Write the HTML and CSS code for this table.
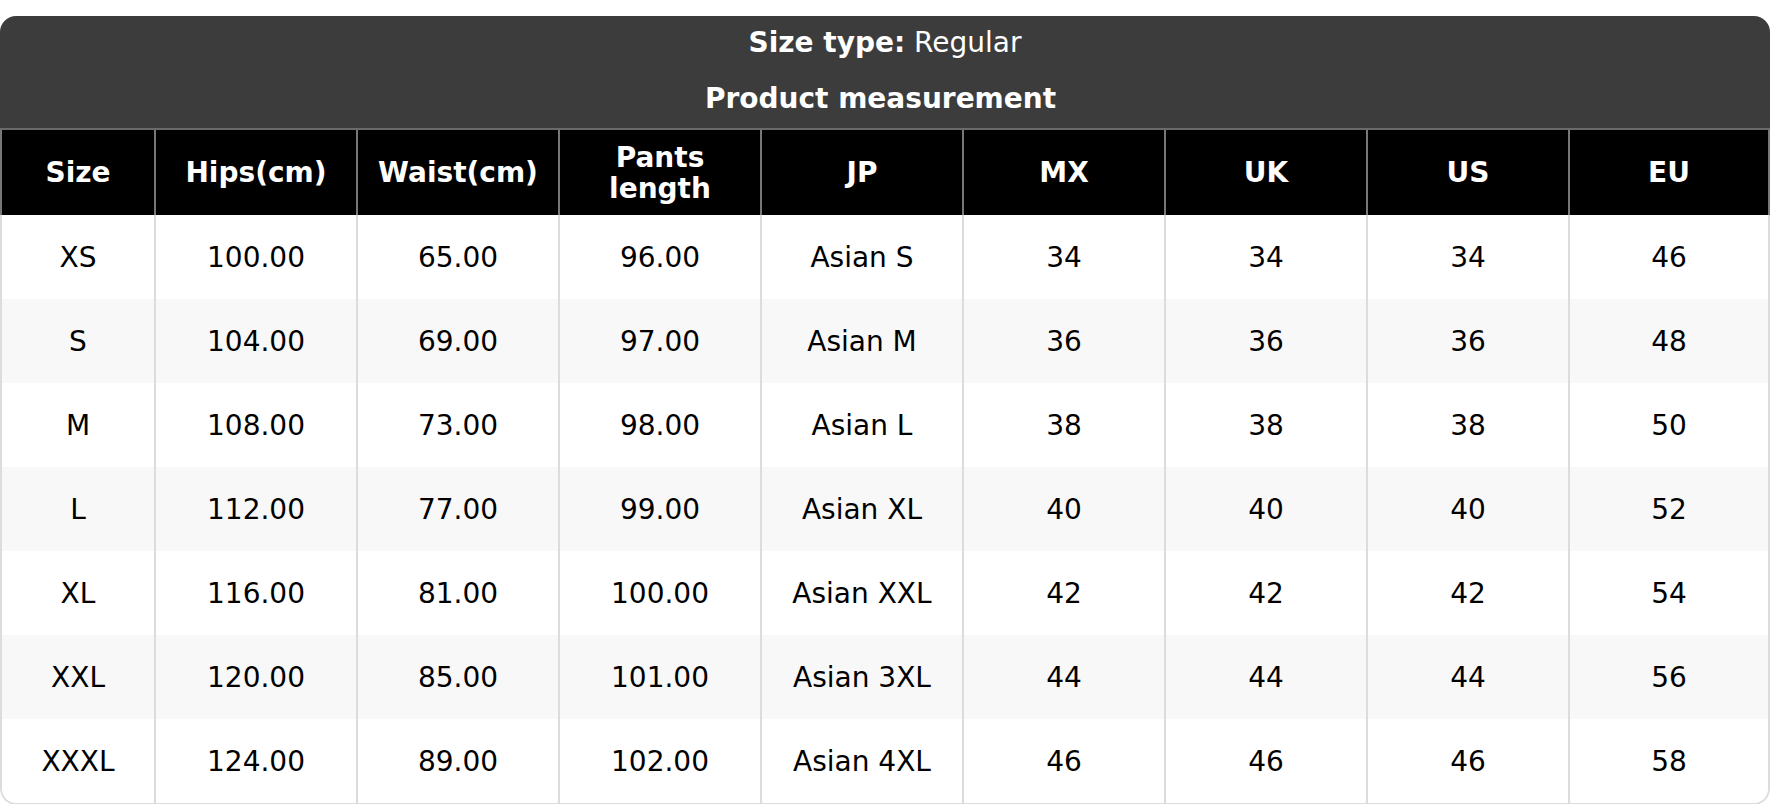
FILE: index.html
```html
<!DOCTYPE html>
<html>
<head>
<meta charset="utf-8">
<link rel="stylesheet" href="styles.css">
</head>
<body>
<div class="card">
  <div class="title">
    <div class="title-line"><b>Size type:</b> Regular</div>
    <div class="title-line title-shift"><b>Product measurement</b></div>
  </div>
  <table class="chart">
    <colgroup>
      <col class="c-first"><col><col><col><col><col><col><col><col>
    </colgroup>
    <thead>
      <tr>
        <th>Size</th><th>Hips(cm)</th><th>Waist(cm)</th><th>Pants<br>length</th><th>JP</th><th>MX</th><th>UK</th><th>US</th><th>EU</th>
      </tr>
    </thead>
    <tbody>
      <tr><td>XS</td><td>100.00</td><td>65.00</td><td>96.00</td><td>Asian S</td><td>34</td><td>34</td><td>34</td><td>46</td></tr>
      <tr><td>S</td><td>104.00</td><td>69.00</td><td>97.00</td><td>Asian M</td><td>36</td><td>36</td><td>36</td><td>48</td></tr>
      <tr><td>M</td><td>108.00</td><td>73.00</td><td>98.00</td><td>Asian L</td><td>38</td><td>38</td><td>38</td><td>50</td></tr>
      <tr><td>L</td><td>112.00</td><td>77.00</td><td>99.00</td><td>Asian XL</td><td>40</td><td>40</td><td>40</td><td>52</td></tr>
      <tr><td>XL</td><td>116.00</td><td>81.00</td><td>100.00</td><td>Asian XXL</td><td>42</td><td>42</td><td>42</td><td>54</td></tr>
      <tr><td>XXL</td><td>120.00</td><td>85.00</td><td>101.00</td><td>Asian 3XL</td><td>44</td><td>44</td><td>44</td><td>56</td></tr>
      <tr><td>XXXL</td><td>124.00</td><td>89.00</td><td>102.00</td><td>Asian 4XL</td><td>46</td><td>46</td><td>46</td><td>58</td></tr>
    </tbody>
  </table>
</div>
</body>
</html>
```

FILE: styles.css
```css
html, body {
  margin: 0;
  padding: 0;
  background: #fff;
}
body {
  padding-top: 16px;
  font-family: "DejaVu Sans", Verdana, sans-serif;
  font-size: 28px;
  color: #000;
}
.card {
  width: 1770px;
  border-radius: 16px;
  overflow: hidden;
  background: #fff;
}
.title {
  background: #3c3c3c;
  color: #fff;
  text-align: center;
  padding: 11px 0 13px;
  display: flex;
  flex-direction: column;
  gap: 24px;
  border-bottom: 2px solid #6a6a6a;
}
.title-line {
  line-height: 32px;
}
.title-shift {
  padding-right: 9px;
}
.chart {
  width: 1770px;
  table-layout: fixed;
  border-collapse: separate;
  border-spacing: 0;
}
.c-first {
  width: 154px;
}
.chart th, .chart td {
  box-sizing: border-box;
  padding: 0;
  text-align: center;
  vertical-align: middle;
}
.chart th {
  background: #000;
  color: #fff;
  font-weight: bold;
  height: 85px;
  line-height: 31px;
  border-left: 2px solid #777;
}
.chart th:last-child {
  border-right: 2px solid #777;
}
.chart td {
  height: 84px;
  font-weight: normal;
  border-left: 2px solid #dcdcdc;
}
.chart td:last-child {
  border-right: 2px solid #dcdcdc;
}
.chart tbody tr:nth-child(even) td {
  background: #f8f8f8;
}
.chart tbody tr:last-child td {
  height: 86px;
  border-bottom: 2px solid #dcdcdc;
}
.chart tbody tr:last-child td:first-child {
  border-bottom-left-radius: 16px;
}
.chart tbody tr:last-child td:last-child {
  border-bottom-right-radius: 16px;
}
```
